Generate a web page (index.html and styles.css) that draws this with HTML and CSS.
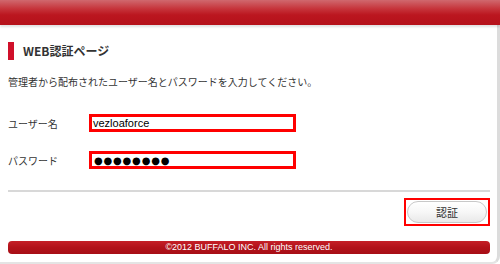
FILE: index.html
```html
<!DOCTYPE html>
<html lang="ja">
<head>
<meta charset="utf-8">
<title>WEB認証ページ</title>
<link rel="stylesheet" href="styles.css">
</head>
<body>
<div class="page">
  <div class="header"></div>
  <div class="panel">
    <h1 class="title"><span class="title-bar"></span><span class="title-text">WEB認証ページ</span></h1>
    <p class="lead">管理者から配布されたユーザー名とパスワードを入力してください。</p>
    <div class="form">
      <div class="row">
        <span class="label">ユーザー名</span>
        <div class="field">vezloaforce</div>
      </div>
      <div class="row">
        <span class="label">パスワード</span>
        <div class="field dots">●●●●●●●●</div>
      </div>
    </div>
    <div class="sep"></div>
    <div class="actions">
      <div class="btn-frame"><button class="btn">認証</button></div>
    </div>
    <div class="footer">©2012 BUFFALO INC. All rights reserved.</div>
  </div>
</div>
</body>
</html>
```
FILE: styles.css
```css
* { box-sizing: border-box; }
html, body { margin: 0; padding: 0; background: #fff; }
.page {
  width: 500px;
  height: 264px;
  overflow: hidden;
  font-family: "Noto Sans CJK JP", "Liberation Sans", sans-serif;
  color: #333;
}
.header {
  height: 25px;
  background: linear-gradient(#d0686e 0%, #c6343b 35%, #bb161f 60%, #b5121b 100%);
  box-shadow: 0 2px 2px rgba(0,0,0,0.12);
  position: relative;
}
.panel {
  width: 500px;
  height: 239px;
  padding: 0 7px 0 8px;
  border-right: 3px solid #dcdcdc;
  border-bottom: 2px solid #e4e4e4;
  border-bottom-right-radius: 8px;
  display: flex;
  flex-direction: column;
}
.title {
  margin: 17px 0 0;
  height: 18px;
  display: flex;
  align-items: center;
  font-size: 12px;
  font-weight: bold;
  color: #333;
}
.title-bar {
  width: 6px;
  height: 18px;
  background: #d0102a;
  margin-right: 9px;
}
.title-text { line-height: 18px; }
.lead {
  margin: 15px 0 0;
  font-size: 10px;
  line-height: 14px;
  color: #333;
}
.form {
  margin-top: 25px;
  display: flex;
  flex-direction: column;
  gap: 19px;
}
.row {
  display: flex;
  align-items: center;
  height: 18px;
}
.label {
  width: 81px;
  font-size: 10px;
  color: #333;
}
.field {
  width: 207px;
  height: 18px;
  border: 3px solid #f00;
  font-family: "Liberation Sans", sans-serif;
  font-size: 11px;
  line-height: 12px;
  padding-left: 1px;
  color: #000;
}
.dots {
  font-family: "DejaVu Sans", sans-serif;
  font-size: 10px;
  letter-spacing: 0.8px;
  line-height: 13px;
  padding-left: 2px;
}
.sep {
  margin-top: 21px;
  height: 2px;
  background: #d8d8d8;
}
.actions {
  display: flex;
  justify-content: flex-end;
  margin-top: 6px;
}
.btn-frame {
  width: 86px;
  height: 28px;
  border: 2px solid #f00;
  padding: 1px;
}
.btn {
  display: block;
  width: 100%;
  height: 100%;
  margin: 0;
  padding: 0;
  border: 1px solid #c8c8c8;
  border-radius: 12px;
  background: linear-gradient(#ffffff 0%, #f7f7f7 50%, #e9e9e9 100%);
  font-family: "Noto Sans CJK JP", sans-serif;
  font-size: 11px;
  color: #333;
}
.footer {
  margin-top: 15px;
  height: 13px;
  border-radius: 4px;
  background: linear-gradient(#c51f27, #b2121a 50%, #a70e16);
  color: #fff;
  font-family: "Liberation Sans", sans-serif;
  font-size: 9px;
  line-height: 13px;
  text-align: center;
}
```
